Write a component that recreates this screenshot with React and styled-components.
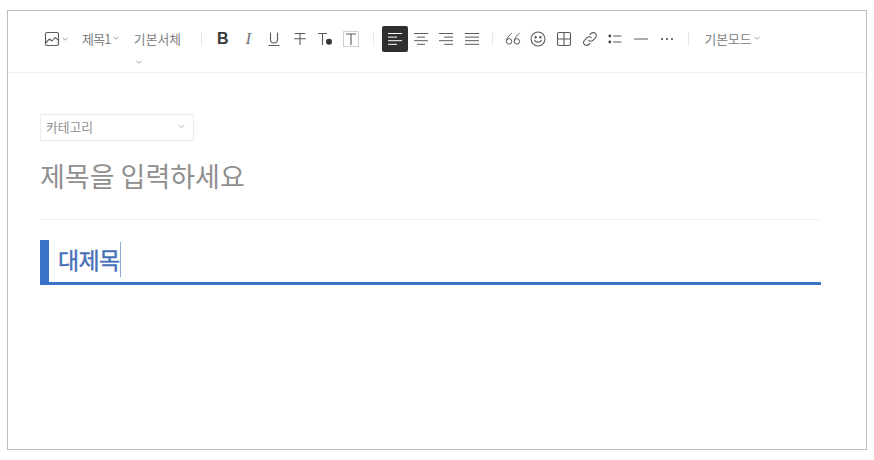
import React from "react";
import styled, { createGlobalStyle } from "styled-components";

const Global = createGlobalStyle`
  html, body { margin: 0; padding: 0; background: #fff; }
  body { font-family: "Noto Sans CJK KR", "Noto Sans", sans-serif; }
`;

const Frame = styled.div`
  box-sizing: border-box;
  width: 860px;
  height: 440px;
  margin: 10px 0 0 7px;
  border: 1px solid #bdbdbd;
  background: #fff;
  display: flex;
  flex-direction: column;
`;

const Toolbar = styled.div`
  box-sizing: border-box;
  height: 62px;
  flex: none;
  padding: 15px 0 0 36px;
  border-bottom: 1px solid #f0f0f0;
  display: flex;
  align-items: flex-start;
`;

const Group = styled.div`
  display: flex;
  align-items: center;
  height: 25px;
  margin-left: ${(p) => p.$ml || 0}px;
`;

const IconGroup = styled(Group)`
  height: 26px;
`;

const Divider = styled.span`
  flex: none;
  width: 1px;
  height: 14px;
  margin: 6px 0 0 ${(p) => p.$ml || 0}px;
  background: #e8e8e8;
`;

const IconBtn = styled.button`
  flex: none;
  width: ${(p) => p.$w || 25.7}px;
  height: 26px;
  padding: 0;
  border: 0;
  border-radius: 2px;
  background: ${(p) => (p.$active ? "#2f2f2f" : "transparent")};
  color: ${(p) => (p.$active ? "#fff" : "#5a5a5a")};
  display: flex;
  align-items: center;
  justify-content: center;
  font-family: inherit;
`;

const Label = styled.span`
  font-size: 12.8px;
  line-height: 25px;
  letter-spacing: ${(p) => p.$ls || 0}px;
  color: #808080;
  white-space: nowrap;
`;

const Gap = styled.span`
  flex: none;
  width: 2px;
`;

const BoldMark = styled.span`
  font-family: "Liberation Sans", sans-serif;
  font-weight: 700;
  font-size: 16px;
  color: #3a3a3a;
`;

const ItalicMark = styled.span`
  font-family: "Liberation Serif", serif;
  font-style: italic;
  font-size: 17px;
  color: #777;
`;

const FontPicker = styled.div`
  flex: none;
  width: 52px;
  height: 40px;
  margin-left: ${(p) => p.$ml}px;
  display: flex;
  flex-wrap: wrap;
  align-content: flex-start;
`;

const FontChevron = styled.span`
  display: block;
  width: 100%;
  height: 6px;
  margin: 6px 0 0 2px;
  line-height: 0;
`;

const Body = styled.div`
  padding: 41px 46px 0 32px;
  display: flex;
  flex-direction: column;
  align-items: flex-start;
`;

const Category = styled.div`
  box-sizing: border-box;
  width: 154px;
  height: 27px;
  padding: 0 8px 2px 5px;
  border: 1px solid #ebebeb;
  display: flex;
  align-items: center;
  justify-content: space-between;
  font-size: 12.8px;
  color: #909090;
`;

const TitleInput = styled.div`
  box-sizing: border-box;
  width: 781px;
  height: 79px;
  padding-top: 16px;
  border-bottom: 1px solid #f2f2f2;
  font-size: 27px;
  line-height: 38px;
  color: #8f8f8f;
  font-weight: 400;
`;

const Heading = styled.div`
  box-sizing: border-box;
  width: 781px;
  height: 45px;
  margin-top: 20px;
  padding: 0 0 4px 9px;
  border-left: 9px solid #3a72c8;
  border-bottom: 3px solid #3a72c8;
  display: flex;
  align-items: center;
  font-size: 23px;
  font-weight: 400;
  -webkit-text-stroke: 0.4px #4670b8;
  letter-spacing: -0.7px;
  color: #4670b8;
`;

const Caret = styled.span`
  display: inline-block;
  width: 1px;
  height: 35px;
  margin-left: 1px;
  background: #8fa9d4;
`;

const Svg = ({ s = 16, children, sw = 1.1 }) => (
  <svg width={s} height={s} viewBox="0 0 16 16" fill="none" stroke="currentColor" strokeWidth={sw} strokeLinecap="round" strokeLinejoin="round">
    {children}
  </svg>
);

const Chevron = ({ color = "#888", w = 6 }) => (
  <svg width={w} height={w * 0.67} viewBox="0 0 6 4" fill="none" stroke={color} strokeWidth="0.8">
    <path d="M0.5 0.7 3 3.2 5.5 0.7" />
  </svg>
);

const AlignIcon = ({ rows }) => (
  <svg width="16" height="14" viewBox="0 0 16 14" fill="none" stroke="currentColor" strokeWidth="1">
    {rows.map(([a, b], i) => (
      <path key={i} d={`M${a} ${1.5 + i * 3.6}H${b}`} />
    ))}
  </svg>
);

export default function App() {
  return (
    <>
      <Global />
      <Frame>
        <Toolbar>
          <IconGroup>
            <IconBtn $w={16}>
              <Svg>
                <rect x="1.5" y="1.5" width="13" height="13" rx="1.6" />
                <path d="M2 11.5 5.5 8 8 10l3-3.5 3 2.4" />
              </Svg>
            </IconBtn>
            <Gap />
            <Chevron />
          </IconGroup>
          <Group $ml={14}>
            <Label $ls={-0.6}>제목1</Label>
            <Gap />
            <Chevron />
          </Group>
          <FontPicker $ml={15}>
            <Label>기본서체</Label>
            <FontChevron>
              <Chevron />
            </FontChevron>
          </FontPicker>
          <Divider $ml={15} />
          <IconGroup $ml={8}>
            <IconBtn>
              <BoldMark>B</BoldMark>
            </IconBtn>
            <IconBtn>
              <ItalicMark>I</ItalicMark>
            </IconBtn>
            <IconBtn>
              <Svg>
                <path d="M4.5 2v6.5a3.5 3.5 0 0 0 7 0V2M3 14.5h10" />
              </Svg>
            </IconBtn>
            <IconBtn>
              <Svg>
                <path d="M3 2.5h10M8 2.5v11M2.5 7.8h11" />
              </Svg>
            </IconBtn>
            <IconBtn>
              <Svg>
                <path d="M1.5 2.5h8M5.5 2.5v11" />
                <circle cx="12" cy="10.8" r="3" fill="#333" stroke="none" />
              </Svg>
            </IconBtn>
            <IconBtn>
              <Svg>
                <rect x="0.5" y="0.5" width="15" height="15" stroke="#d0d0d0" />
                <path d="M3.5 3h9M8 3v10.5" />
              </Svg>
            </IconBtn>
          </IconGroup>
          <Divider $ml={9} />
          <IconGroup $ml={8}>
            <IconBtn $active>
              <AlignIcon rows={[[1, 15], [1, 10], [1, 15], [1, 10]]} />
            </IconBtn>
            <IconBtn>
              <AlignIcon rows={[[1, 15], [4, 12], [1, 15], [4, 12]]} />
            </IconBtn>
            <IconBtn>
              <AlignIcon rows={[[1, 15], [6, 15], [1, 15], [6, 15]]} />
            </IconBtn>
            <IconBtn>
              <AlignIcon rows={[[1, 15], [1, 15], [1, 15], [1, 15]]} />
            </IconBtn>
          </IconGroup>
          <Divider $ml={7} />
          <IconGroup $ml={7}>
            <IconBtn>
              <Svg sw={1}>
                <path d="M6.4 2.5C3.4 5 1.4 7.6 1.4 10.4a2.7 2.7 0 1 0 5.4 0 2.7 2.7 0 0 0-5.3-.8" />
                <path d="M14.2 2.5c-3 2.5-5 5.1-5 7.9a2.7 2.7 0 1 0 5.4 0 2.7 2.7 0 0 0-5.3-.8" />
              </Svg>
            </IconBtn>
            <IconBtn>
              <Svg>
                <circle cx="8" cy="8" r="7" />
                <circle cx="5.6" cy="6.3" r="0.7" fill="currentColor" />
                <circle cx="10.4" cy="6.3" r="0.7" fill="currentColor" />
                <path d="M4.6 9.2c1 2.6 5.8 2.6 6.8 0" />
              </Svg>
            </IconBtn>
            <IconBtn>
              <Svg>
                <rect x="1.5" y="1.5" width="13" height="13" rx="1.5" />
                <path d="M8 1.5v13M1.5 8h13" />
              </Svg>
            </IconBtn>
            <IconBtn>
              <Svg>
                <path d="M6.7 9.3a3 3 0 0 0 4.3 0l2.5-2.6a3 3 0 0 0-4.3-4.2L8 3.7" />
                <path d="M9.3 6.7a3 3 0 0 0-4.3 0L2.5 9.3a3 3 0 0 0 4.3 4.2L8 12.3" />
              </Svg>
            </IconBtn>
            <IconBtn>
              <Svg>
                <circle cx="2.8" cy="5" r="1.4" fill="#444" stroke="none" />
                <circle cx="2.8" cy="11" r="1.4" fill="#444" stroke="none" />
                <path d="M6.5 5H14M6.5 11H14" />
              </Svg>
            </IconBtn>
            <IconBtn>
              <Svg>
                <path d="M1.5 8h13" />
              </Svg>
            </IconBtn>
            <IconBtn>
              <Svg>
                <circle cx="3" cy="8" r="1" fill="#444" stroke="none" />
                <circle cx="8" cy="8" r="1" fill="#444" stroke="none" />
                <circle cx="13" cy="8" r="1" fill="#444" stroke="none" />
              </Svg>
            </IconBtn>
          </IconGroup>
          <Divider $ml={8} />
          <Group $ml={16}>
            <Label>기본모드</Label>
            <Gap />
            <Chevron />
          </Group>
        </Toolbar>
        <Body>
          <Category>
            <span>카테고리</span>
            <Chevron color="#aaa" w={7} />
          </Category>
          <TitleInput>제목을 입력하세요</TitleInput>
          <Heading>
            대제목
            <Caret />
          </Heading>
        </Body>
      </Frame>
    </>
  );
}
